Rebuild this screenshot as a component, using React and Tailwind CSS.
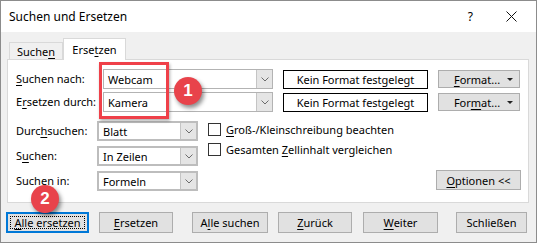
import React from "react";

const U = ({ children }) => (
  <span className="underline underline-offset-[2px] decoration-[1px]">{children}</span>
);

const Chevron = () => (
  <svg width="8" height="5" viewBox="0 0 8 5" className="block">
    <path d="M0.5 0.5 L4 4 L7.5 0.5" fill="none" stroke="#6b6b6b" strokeWidth="1" />
  </svg>
);

const Combo = ({ value, w, border }) => (
  <div className={`h-[20px] ${w} flex bg-white ${border}`}>
    <div className="flex-1 flex items-center pl-[4px] leading-none">{value}</div>
    <div className="w-[16px] h-full bg-[#e5e5e5] border-l border-[#c4c4c4] flex items-center justify-center">
      <Chevron />
    </div>
  </div>
);

const Btn = ({ children, w, focused }) => (
  <div
    className={`h-[21px] ${w} flex items-center justify-center bg-[#e1e1e1] leading-none ${
      focused ? "border-2 border-[#0078d7]" : "border border-[#adadad]"
    }`}
  >
    {focused ? (
      <div className="w-[calc(100%-4px)] h-[calc(100%-4px)] border border-dotted border-black flex items-center justify-center">
        {children}
      </div>
    ) : (
      children
    )}
  </div>
);

const FormatBtn = ({ children }) => (
  <div className="h-[18px] w-[82px] bg-[#e1e1e1] border border-[#adadad] flex items-center leading-none">
    <div className="flex-1 text-center pl-[8px]">{children}</div>
    <svg width="6" height="3" viewBox="0 0 6 3" className="mr-[6px]">
      <path d="M0 0 L6 0 L3 3 Z" fill="#222" />
    </svg>
  </div>
);

const Checkbox = ({ children }) => (
  <div className="flex items-center h-[13px] leading-none">
    <div className="w-[13px] h-[13px] border border-[#333] bg-white" />
    <div className="ml-[5px] whitespace-nowrap">{children}</div>
  </div>
);

const Badge = ({ n, className }) => (
  <div
    className={`absolute w-[28px] h-[28px] rounded-full bg-[#e8434b] text-white font-bold text-[17px] flex items-center justify-center shadow-[2px_3px_4px_rgba(0,0,0,0.45)] font-['Liberation_Sans',sans-serif] ${className}`}
  >
    {n}
  </div>
);

export default function App() {
  return (
    <div className="relative w-[537px] h-[243px] bg-[#f0f0f0] border border-[#8c8c8c] flex flex-col text-[11px] text-black font-['Noto_Sans',sans-serif] overflow-hidden">
      {/* title bar */}
      <div className="h-[31px] bg-white flex items-center pl-[8px] shrink-0">
        <span className="text-[12px]">Suchen und Ersetzen</span>
        <span className="ml-auto text-[12px] mr-[33px]">?</span>
        <svg width="11" height="11" viewBox="0 0 11 11" className="mr-[19px]">
          <path d="M0.5 0.5 L10.5 10.5 M10.5 0.5 L0.5 10.5" stroke="#111" strokeWidth="1" />
        </svg>
      </div>

      {/* body */}
      <div className="px-[6px] pt-[6px] flex flex-col">
        {/* tabs */}
        <div className="h-[21px] flex items-end pl-[2px]">
          <div className="w-[54px] h-[17px] border border-b-0 border-[#d9d9d9] bg-[#f0f0f0] flex items-center justify-center leading-none">
            <span>
              Suche<U>n</U>
            </span>
          </div>
          <div className="relative z-10 -mb-px w-[63px] h-[22px] border border-b-0 border-[#d9d9d9] bg-white flex items-center justify-center leading-none">
            <span>
              Erse<U>t</U>zen
            </span>
          </div>
        </div>

        {/* panel */}
        <div className="w-[522px] h-[144px] bg-white border border-[#d9d9d9] pt-[9px] pl-[8px] pr-[7px] flex flex-col">
          <div className="flex items-center h-[20px]">
            <div className="w-[87px]">
              <U>S</U>uchen nach:
            </div>
            <Combo value="Webcam" w="w-[170px]" border="border border-[#b3b3b3]" />
            <div className="ml-[10px] w-[145px] h-[19px] border border-black flex items-center justify-center leading-none">
              Kein Format festgelegt
            </div>
            <div className="ml-[10px]">
              <FormatBtn>
                <U>F</U>ormat...
              </FormatBtn>
            </div>
          </div>
          <div className="flex items-center h-[20px] mt-[3px]">
            <div className="w-[87px]">
              E<U>r</U>setzen durch:
            </div>
            <Combo value="Kamera" w="w-[170px]" border="border border-[#b3b3b3]" />
            <div className="ml-[10px] w-[145px] h-[19px] border border-black flex items-center justify-center leading-none">
              Kein Format festgelegt
            </div>
            <div className="ml-[10px]">
              <FormatBtn>
                For<U>m</U>at...
              </FormatBtn>
            </div>
          </div>

          <div className="flex mt-[9px]">
            <div className="flex flex-col gap-[5px]">
              <div className="flex items-center">
                <div className="w-[81px]">
                  Durc<U>h</U>suchen:
                </div>
                <Combo value="Blatt" w="w-[101px]" border="border-2 border-[#bdbdbd]" />
              </div>
              <div className="flex items-center">
                <div className="w-[81px]">
                  S<U>u</U>chen:
                </div>
                <Combo value="In Zeilen" w="w-[101px]" border="border-2 border-[#bdbdbd]" />
              </div>
              <div className="flex items-center">
                <div className="w-[81px]">
                  Such<U>e</U>n in:
                </div>
                <Combo value="Formeln" w="w-[101px]" border="border-2 border-[#bdbdbd]" />
              </div>
            </div>
            <div className="ml-[10px] pt-[2px] flex flex-col gap-[7px]">
              <Checkbox>
                <U>G</U>roß-/Kleinschreibung beachten
              </Checkbox>
              <Checkbox>
                Gesamten <U>Z</U>ellinhalt vergleichen
              </Checkbox>
            </div>
            <div className="ml-auto self-end mb-[1px]">
              <div className="h-[20px] w-[85px] bg-[#e1e1e1] border border-[#adadad] flex items-center justify-center leading-none">
                <span>
                  <U>O</U>ptionen &lt;&lt;
                </span>
              </div>
            </div>
          </div>
        </div>

        {/* bottom buttons */}
        <div className="flex mt-[9px] -ml-px">
          <Btn w="w-[83px]" focused>
            <span>
              <U>A</U>lle ersetzen
            </span>
          </Btn>
          <div className="ml-[10px]">
            <Btn w="w-[74px]">
              <span>
                <U>E</U>rsetzen
              </span>
            </Btn>
          </div>
          <div className="ml-[19px]">
            <Btn w="w-[76px]">
              <span>
                A<U>l</U>le suchen
              </span>
            </Btn>
          </div>
          <div className="ml-[10px]">
            <Btn w="w-[74px]">
              <span>
                <U>Z</U>urück
              </span>
            </Btn>
          </div>
          <div className="ml-[11px]">
            <Btn w="w-[75px]">
              <span>
                <U>W</U>eiter
              </span>
            </Btn>
          </div>
          <div className="ml-[18px]">
            <Btn w="w-[71px]">
              <span>Schließen</span>
            </Btn>
          </div>
        </div>
      </div>

      {/* red highlight */}
      <div className="absolute left-[98px] top-[61px] w-[70px] h-[57px] border-[3px] border-[#ef4049] shadow-[1px_2px_3px_rgba(0,0,0,0.3)]" />
      <Badge n="1" className="left-[173px] top-[76px]" />
      <Badge n="2" className="left-[30px] top-[184px]" />
    </div>
  );
}
